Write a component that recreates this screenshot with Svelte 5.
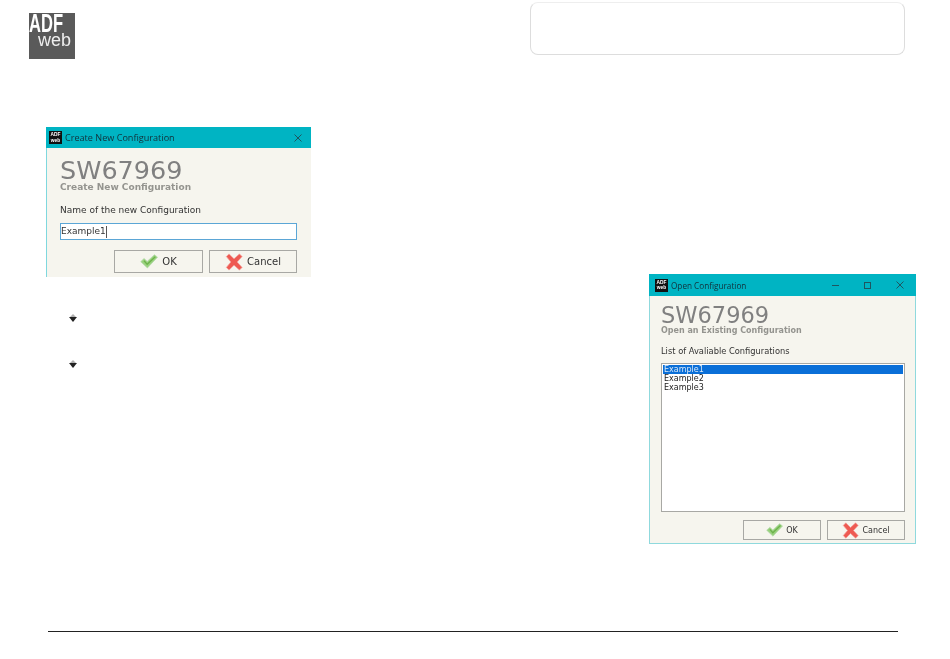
<script>
	const configs = ['Example1', 'Example2', 'Example3'];
</script>

{#snippet winIcon()}
	<div class="win-icon"><span>ADF</span><span>web</span></div>
{/snippet}

{#snippet closeIcon()}
	<svg class="close" width="8" height="8" viewBox="0 0 8 8">
		<path d="M0.5 0.5 L7.5 7.5 M7.5 0.5 L0.5 7.5" stroke="#1f5660" stroke-width="1" fill="none" />
	</svg>
{/snippet}

{#snippet okIcon(size)}
	<svg width={size} height={size * 0.8} viewBox="0 0 20 16">
		<path d="M0.8 8.5 L4.5 5 L8 8.2 L16 0.8 L19.5 3.5 L8.2 15.5 Z" fill="#9ad27e" stroke="#b5d8ae" stroke-width="0.8" />
		<path d="M4.5 7.5 L8 11.5 L17 3" fill="none" stroke="#6db24c" stroke-width="1.5" />
	</svg>
{/snippet}

{#snippet cancelIcon(size)}
	<svg width={size} height={size} viewBox="0 0 20 20">
		<path d="M1.5 4 L4.5 1 L10 6.5 L16 1 L19 4 L13.5 10 L19 16 L16 19 L10 13.5 L4.5 19 L1.5 16 L6.5 10 Z" fill="#ee5a52" stroke="#f3a09a" stroke-width="0.8" />
	</svg>
{/snippet}

{#snippet bullet()}
	<svg class="bullet" width="8" height="8" viewBox="0 0 8 8">
		<path d="M4 0 L7 3 L1 3 Z" fill="#b0b0b0" />
		<path d="M0 3 L8 3 L4 8 Z" fill="#222" />
	</svg>
{/snippet}

<div class="page">
	<header>
		<div class="logo">
			<svg width="46" height="46" viewBox="0 0 46 46">
				<rect width="46" height="46" fill="#5a5a5a" />
				<text x="0" y="19" class="adf" textLength="34" lengthAdjust="spacingAndGlyphs">ADF</text>
				<text x="9" y="33" class="web" textLength="33" lengthAdjust="spacingAndGlyphs">web</text>
			</svg>
		</div>
		<div class="note"></div>
	</header>

	<main>
		<section class="left">
			<div class="dialog create">
				<div class="titlebar">
					{@render winIcon()}
					<span class="wintitle">Create New Configuration</span>
					{@render closeIcon()}
				</div>
				<div class="body">
					<div class="code">SW67969</div>
					<div class="sub">Create New Configuration</div>
					<div class="label">Name of the new Configuration</div>
					<div class="input">Example1<i class="caret"></i></div>
					<div class="buttons">
						<button>{@render okIcon(18)}<span>OK</span></button>
						<button>{@render cancelIcon(18)}<span>Cancel</span></button>
					</div>
				</div>
			</div>
			<ul class="bullets">
				<li>{@render bullet()}</li>
				<li>{@render bullet()}</li>
			</ul>
		</section>

		<section class="dialog open">
			<div class="titlebar">
				{@render winIcon()}
				<span class="wintitle">Open Configuration</span>
				<span class="controls">
					<i class="min"></i>
					<i class="max"></i>
					{@render closeIcon()}
				</span>
			</div>
			<div class="body">
				<div class="code">SW67969</div>
				<div class="sub">Open an Existing Configuration</div>
				<div class="label">List of Avaliable Configurations</div>
				<div class="list">
					{#each configs as c, i}
						<div class="row" class:selected={i === 0}>{c}</div>
					{/each}
				</div>
				<div class="buttons">
					<button>{@render okIcon(17)}<span>OK</span></button>
					<button>{@render cancelIcon(17)}<span>Cancel</span></button>
				</div>
			</div>
		</section>
	</main>

	<footer></footer>
</div>

<style>
	:global(body) {
		background: #fff;
	}
	.page {
		width: 950px;
		height: 659px;
		overflow: hidden;
		font-family: "DejaVu Sans", sans-serif;
	}
	header {
		display: flex;
		justify-content: space-between;
		align-items: flex-start;
		height: 59px;
		padding: 0 45px 0 29px;
	}
	.logo {
		margin-top: 13px;
		height: 46px;
		filter: blur(0.4px);
	}
	.logo svg {
		display: block;
	}
	.adf {
		font: bold 26px "Liberation Sans", sans-serif;
		fill: #fff;
	}
	.web {
		font: 18px "Liberation Sans", sans-serif;
		fill: #eee;
	}
	.note {
		box-sizing: border-box;
		width: 375px;
		height: 53px;
		margin-top: 2px;
		border: 1px solid #ddd;
		border-top-color: #eee;
		border-radius: 8px;
	}
	main {
		display: flex;
		justify-content: space-between;
		align-items: flex-start;
		margin-top: 68px;
		padding: 0 34px 0 46px;
	}
	.dialog {
		box-sizing: border-box;
		display: flex;
		flex-direction: column;
		background: #f6f5ee;
		filter: blur(0.35px);
	}
	.create {
		width: 265px;
		height: 150px;
		border-left: 1px solid #7fd8de;
	}
	.open {
		width: 267px;
		height: 270px;
		margin-top: 147px;
		border: 1px solid #8fd9dd;
		border-top: 0;
	}
	.titlebar {
		display: flex;
		align-items: center;
		gap: 3px;
		flex: none;
		background: #00b4c3;
		color: #12303a;
	}
	.create .titlebar {
		height: 21px;
		margin-left: -1px;
		padding-left: 3px;
	}
	.open .titlebar {
		height: 22px;
		margin: 0 -1px;
		padding-left: 6px;
	}
	.win-icon {
		box-sizing: border-box;
		display: flex;
		flex-direction: column;
		justify-content: center;
		align-items: center;
		width: 13px;
		height: 13px;
		background: #111;
		color: #fff;
		font: bold 4.8px/5.4px "Liberation Sans", sans-serif;
	}
	.wintitle {
		font: 9.1px "Open Sans", sans-serif;
	}
	.open .wintitle {
		font-size: 8.2px;
	}
	.close {
		flex: none;
		margin-left: auto;
		margin-right: 9px;
	}
	.controls {
		display: flex;
		align-items: center;
		margin-left: auto;
		gap: 25px;
	}
	.controls .close {
		margin: 0 12px 0 0;
	}
	.min {
		width: 7px;
		height: 1px;
		background: #1f5660;
	}
	.max {
		box-sizing: border-box;
		width: 7px;
		height: 7px;
		border: 1px solid #1f5660;
	}
	.body {
		display: flex;
		flex-direction: column;
		flex: 1;
		padding: 0 14px 0 13px;
	}
	.open .body {
		padding: 0 10px 0 11px;
	}
	.code {
		margin-top: 11px;
		margin-bottom: 1px;
		font-size: 25.5px;
		line-height: 22px;
		color: #808080;
	}
	.sub {
		font-size: 9px;
		line-height: 11px;
		font-weight: bold;
		color: #94948f;
	}
	.label {
		margin-top: 12px;
		font-size: 9px;
		line-height: 11px;
		color: #333;
	}
	.input {
		box-sizing: border-box;
		height: 17px;
		margin-top: 7px;
		padding: 0;
		background: #fff;
		border: 1px solid #5ba6d6;
		font-size: 9px;
		line-height: 15px;
		color: #333;
	}
	.caret {
		display: inline-block;
		width: 1px;
		height: 12px;
		background: #555;
		vertical-align: middle;
	}
	.buttons {
		display: flex;
		justify-content: flex-end;
		gap: 6px;
		margin-top: 10px;
	}
	button {
		box-sizing: border-box;
		display: flex;
		align-items: center;
		justify-content: center;
		gap: 4px;
		width: 88px;
		height: 23px;
		padding: 0;
		background: #f6f5ee;
		border: 1px solid #a8a8a4;
		font: 10px "DejaVu Sans", sans-serif;
		color: #333;
	}
	button:first-child {
		width: 89px;
	}
	.open .code {
		margin-top: 9px;
		margin-bottom: 1px;
		font-size: 22.5px;
		line-height: 20px;
	}
	.open .sub {
		font-size: 8px;
		line-height: 10px;
	}
	.open .label {
		margin-top: 10px;
		font-size: 8.3px;
		line-height: 10px;
	}
	.list {
		box-sizing: border-box;
		height: 149px;
		margin-top: 7px;
		padding: 1px;
		background: #fff;
		border: 1px solid #a8a8a4;
		font-size: 8px;
		line-height: 9px;
		color: #222;
	}
	.row {
		padding-left: 1px;
	}
	.selected {
		background: #0a6fd8;
		color: #d8e8f8;
	}
	.open .buttons {
		margin-top: 8px;
	}
	.open button {
		width: 78px;
		height: 20px;
		font-size: 8px;
		gap: 3px;
	}
	.left {
		width: 265px;
	}
	.bullets {
		list-style: none;
		margin: 37px 0 0;
		padding: 0 0 0 23px;
	}
	.bullets li {
		height: 46px;
	}
	.bullet {
		display: block;
		filter: blur(0.3px);
	}
	footer {
		height: 1px;
		margin: 87px 52px 0 48px;
		background: #222;
	}
</style>
